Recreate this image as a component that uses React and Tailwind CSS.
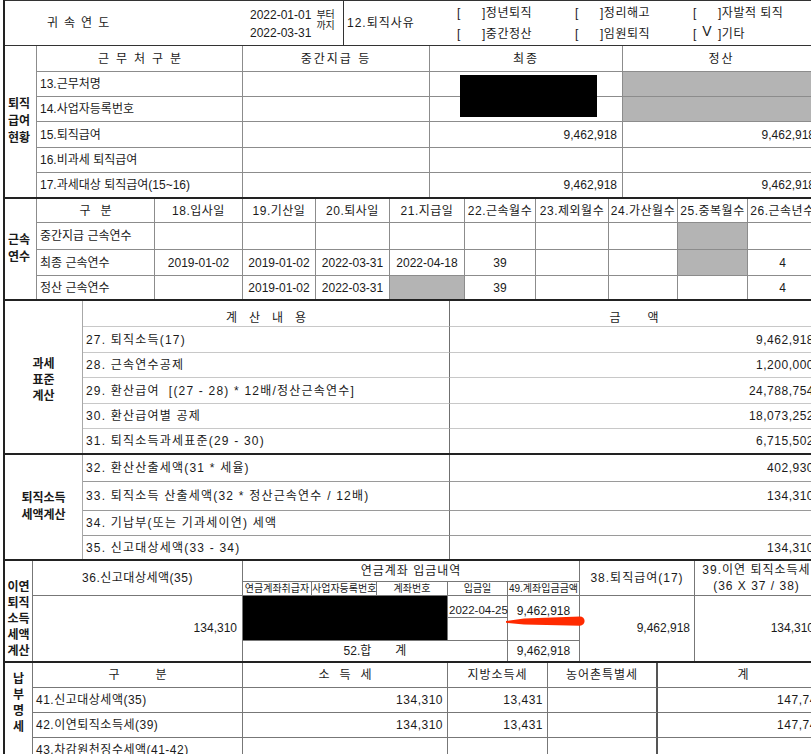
import React from "react";

const cell = "border-r border-b border-[#8c8c8c]";
const cellR = "border-r border-[#8c8c8c]";
const grey = "bg-[#b4b4b4]";
const dk = "border-r border-b border-[#777]";
const dkR = "border-r border-[#777]";
const dkB = "border-b border-[#777]";

function Sp({ chars, gap }) {
  return (
    <span className={"inline-flex " + gap}>
      {chars.map((c, i) => (
        <span key={i}>{c}</span>
      ))}
    </span>
  );
}

function Box({ label, mark }) {
  return (
    <div className="flex items-center">
      <span className="w-[25px] flex items-center">
        <span>[</span>
        {mark && <span className="ml-[6px] text-[14px] -mt-[5px]">V</span>}
      </span>
      <span className="tracking-[0.5px]">]{label}</span>
    </div>
  );
}

function Header() {
  return (
    <div className="flex h-[46px] border-t border-b border-[#333]">
      <div className="w-[238px] flex items-center pl-[42px]">
        <Sp chars={["귀", "속", "연", "도"]} gap="gap-[6px]" />
      </div>
      <div className="w-[100px] flex pt-[9px] pl-[7px]">
        <div className="flex flex-col gap-[8px] leading-[10px]">
          <span>2022-01-01</span>
          <span>2022-03-31</span>
        </div>
        <div className="ml-[5px] flex flex-col text-[10px] leading-[11px] -mt-[1px]">
          <span>부터</span>
          <span>까지</span>
        </div>
      </div>
      <div className="w-[110px] border-l border-[#333] flex items-center pl-[3px] tracking-[1px]">
        12.퇴직사유
      </div>
      <div className="grid grid-cols-[118px_118px_118px] grid-rows-[21px_21px] pt-[1px] pl-[4px]">
        <Box label="정년퇴직" />
        <Box label="정리해고" />
        <Box label="자발적 퇴직" />
        <Box label="중간정산" />
        <Box label="임원퇴직" />
        <Box label="기타" mark />
      </div>
    </div>
  );
}

function Salary() {
  return (
    <div className="border-b-2 border-[#222]">
      <table className="table-fixed border-separate border-spacing-0 w-[816px]">
        <colgroup>
          <col className="w-[32px]" />
          <col className="w-[206px]" />
          <col className="w-[187px]" />
          <col className="w-[193px]" />
          <col className="w-[198px]" />
        </colgroup>
        <tbody>
          <tr className="h-[26px]">
            <td rowSpan={6} className={`${cellR} pl-[3px] font-bold leading-[17px]`}>
              퇴직
              <br />
              급여
              <br />
              현황
            </td>
            <td className={`${cell} text-center`}>
              <Sp chars={["근", "무", "처", "구", "분"]} gap="gap-[7px]" />
            </td>
            <td className={`${cell} text-center tracking-[2px]`}>중간지급 등</td>
            <td className={`${cell} text-center tracking-[2px]`}>최종</td>
            <td className={`${cell} text-center tracking-[2px]`}>정산</td>
          </tr>
          <tr className="h-[25px]">
            <td className={`${cell} pl-[3px]`}>13.근무처명</td>
            <td className={cell}></td>
            <td className={`${cell} relative`}>
              <div className="absolute left-[30px] top-[3px] w-[137px] h-[42px] bg-black" />
            </td>
            <td className={`${cell} ${grey}`}></td>
          </tr>
          <tr className="h-[25px]">
            <td className={`${cell} pl-[3px]`}>14.사업자등록번호</td>
            <td className={cell}></td>
            <td className={cell}></td>
            <td className={`${cell} ${grey}`}></td>
          </tr>
          <tr className="h-[26px]">
            <td className={`${cell} pl-[3px]`}>15.퇴직급여</td>
            <td className={cell}></td>
            <td className={`${cell} text-right pr-[5px]`}>9,462,918</td>
            <td className={`${cell} text-right pr-[5px]`}>9,462,918</td>
          </tr>
          <tr className="h-[25px]">
            <td className={`${cell} pl-[3px]`}>16.비과세 퇴직급여</td>
            <td className={cell}></td>
            <td className={cell}></td>
            <td className={cell}></td>
          </tr>
          <tr className="h-[24px]">
            <td className={`${cellR} pl-[3px]`}>17.과세대상 퇴직급여(15~16)</td>
            <td className={cellR}></td>
            <td className={`${cellR} text-right pr-[5px]`}>9,462,918</td>
            <td className={`${cellR} text-right pr-[5px]`}>9,462,918</td>
          </tr>
        </tbody>
      </table>
    </div>
  );
}

const tenureHeads = [
  "18.입사일",
  "19.기산일",
  "20.퇴사일",
  "21.지급일",
  "22.근속월수",
  "23.제외월수",
  "24.가산월수",
  "25.중복월수",
  "26.근속년수",
];

const tenureRows = [
  { label: "중간지급 근속연수", h: "h-[27px]", v: ["", "", "", "", "", "", "", "g", ""] },
  {
    label: "최종 근속연수",
    h: "h-[26px]",
    v: ["2019-01-02", "2019-01-02", "2022-03-31", "2022-04-18", "39", "", "", "g", "4"],
  },
  { label: "정산 근속연수", h: "h-[23px]", v: ["", "2019-01-02", "2022-03-31", "g", "39", "", "", "", "4"] },
];

function Tenure() {
  return (
    <div className="border-b-2 border-[#222]">
      <table className="table-fixed border-separate border-spacing-0 w-[813px]">
        <colgroup>
          <col className="w-[32px]" />
          <col className="w-[118px]" />
          <col className="w-[88px]" />
          <col className="w-[73px]" />
          <col className="w-[74px]" />
          <col className="w-[75px]" />
          <col className="w-[71px]" />
          <col className="w-[73px]" />
          <col className="w-[69px]" />
          <col className="w-[70px]" />
          <col className="w-[70px]" />
        </colgroup>
        <tbody>
          <tr className="h-[24px]">
            <td rowSpan={4} className={`${cellR} pl-[3px] font-bold leading-[17px]`}>
              근속
              <br />
              연수
            </td>
            <td className={`${cell} text-center`}>
              <Sp chars={["구", "분"]} gap="gap-[10px]" />
            </td>
            {tenureHeads.map((h) => (
              <td key={h} className={`${cell} text-center tracking-[0.5px] whitespace-nowrap`}>
                {h}
              </td>
            ))}
          </tr>
          {tenureRows.map((r, ri) => (
            <tr key={r.label} className={r.h}>
              <td className={`${ri === 2 ? cellR : cell} pl-[3px]`}>{r.label}</td>
              {r.v.map((v, i) => (
                <td
                  key={i}
                  className={`${ri === 2 ? cellR : cell} text-center ${v === "g" ? grey : ""}`}
                >
                  {v === "g" ? "" : v}
                </td>
              ))}
            </tr>
          ))}
        </tbody>
      </table>
    </div>
  );
}

const baseRows = [
  { label: "27. 퇴직소득(17)", v: "9,462,918", h: "h-[26px]" },
  { label: "28. 근속연수공제", v: "1,200,000", h: "h-[25px]" },
  { label: "29. 환산급여  [(27 - 28) * 12배/정산근속연수]", v: "24,788,754", h: "h-[26px]" },
  { label: "30. 환산급여별 공제", v: "18,073,252", h: "h-[25px]" },
  { label: "31. 퇴직소득과세표준(29 - 30)", v: "6,715,502", h: "h-[24px]" },
];

function TaxBase() {
  return (
    <div className="border-b-2 border-[#222]">
      <table className="table-fixed border-separate border-spacing-0 w-[813px]">
        <colgroup>
          <col className="w-[78px]" />
          <col className="w-[367px]" />
          <col className="w-[368px]" />
        </colgroup>
        <tbody>
          <tr className="h-[26px]">
            <td rowSpan={6} className="border-r border-[#a8a8a8] text-center font-bold leading-[16px] pt-[6px]">
              과세
              <br />
              표준
              <br />
              계산
            </td>
            <td className="border-r border-b border-r-[#707070] border-b-[#c8c8c8] p-0">
              <div className="flex h-[25px] items-end justify-center pb-[2px]">
                <Sp chars={["계", "산", "내", "용"]} gap="gap-[12px]" />
              </div>
            </td>
            <td className="border-b border-[#c8c8c8] p-0">
              <div className="flex h-[25px] items-end justify-center pb-[2px]">
                <Sp chars={["금", "액"]} gap="gap-[27px]" />
              </div>
            </td>
          </tr>
          {baseRows.map((r, i) => (
            <tr key={r.label} className={r.h}>
              <td
                className={
                  i === 4
                    ? "border-r border-[#707070] pl-[3px] tracking-[1.2px] whitespace-pre"
                    : "border-r border-b border-r-[#707070] border-b-[#c8c8c8] pl-[3px] tracking-[1.2px] whitespace-pre"
                }
              >
                {r.label}
              </td>
              <td
                className={
                  i === 4
                    ? "text-right pr-[4px] tracking-[0.5px]"
                    : "border-b border-[#c8c8c8] text-right pr-[4px] tracking-[0.5px]"
                }
              >
                {r.v}
              </td>
            </tr>
          ))}
        </tbody>
      </table>
    </div>
  );
}

const calcRows = [
  { label: "32. 환산산출세액(31 * 세율)", v: "402,930", h: "h-[27px]" },
  { label: "33. 퇴직소득 산출세액(32 * 정산근속연수 / 12배)", v: "134,310", h: "h-[29px]" },
  { label: "34. 기납부(또는 기과세이연) 세액", v: "", h: "h-[25px]" },
  { label: "35. 신고대상세액(33 - 34)", v: "134,310", h: "h-[23px]" },
];

function TaxCalc() {
  return (
    <div className="border-b-2 border-[#222]">
      <table className="table-fixed border-separate border-spacing-0 w-[813px]">
        <colgroup>
          <col className="w-[78px]" />
          <col className="w-[367px]" />
          <col className="w-[368px]" />
        </colgroup>
        <tbody>
          {calcRows.map((r, i) => (
            <tr key={r.label} className={r.h}>
              {i === 0 && (
                <td rowSpan={4} className="border-r border-[#a8a8a8] text-center font-bold leading-[17px]">
                  퇴직소득
                  <br />
                  세액계산
                </td>
              )}
              <td
                className={
                  i === 3
                    ? "border-r border-[#707070] pl-[3px] tracking-[1.2px]"
                    : "border-r border-b border-r-[#707070] border-b-[#9a9a9a] pl-[3px] tracking-[1.2px]"
                }
              >
                {r.label}
              </td>
              <td
                className={
                  i === 3
                    ? "text-right pr-[4px] tracking-[0.5px]"
                    : "border-b border-[#9a9a9a] text-right pr-[4px] tracking-[0.5px]"
                }
              >
                {r.v}
              </td>
            </tr>
          ))}
        </tbody>
      </table>
    </div>
  );
}

function Deferred() {
  return (
    <div className="relative border-b-2 border-[#222]">
      <table className="table-fixed border-separate border-spacing-0 w-[813px]">
        <colgroup>
          <col className="w-[28px]" />
          <col className="w-[210px]" />
          <col className="w-[69px]" />
          <col className="w-[65px]" />
          <col className="w-[71px]" />
          <col className="w-[60px]" />
          <col className="w-[72px]" />
          <col className="w-[115px]" />
          <col className="w-[123px]" />
        </colgroup>
        <tbody>
          <tr className="h-[21px]">
            <td rowSpan={5} className={`${dkR} text-center font-bold leading-[16px] pt-[16px]`}>
              이연
              <br />
              퇴직
              <br />
              소득
              <br />
              세액
              <br />
              계산
            </td>
            <td rowSpan={2} className={`${dk} text-center tracking-[0.5px]`}>
              36.신고대상세액(35)
            </td>
            <td colSpan={5} className={`${dk} text-center tracking-[1px]`}>
              연금계좌 입금내역
            </td>
            <td rowSpan={2} className={`${dk} text-center tracking-[1px]`}>
              38.퇴직급여(17)
            </td>
            <td rowSpan={2} className={`${dkB} text-center leading-[16px] tracking-[1px] whitespace-nowrap`}>
              39.이연 퇴직소득세
              <br />
              (36 X 37 / 38)
            </td>
          </tr>
          <tr className="h-[14px] text-[10px]">
            <td className={`${dk} text-center whitespace-nowrap`}>연금계좌취급자</td>
            <td className={`${dk} text-center whitespace-nowrap`}>사업자등록번호</td>
            <td className={`${dk} text-center`}>계좌번호</td>
            <td className={`${dk} text-center`}>입금일</td>
            <td className={`${dk} text-center whitespace-nowrap`}>49.계좌입금금액</td>
          </tr>
          <tr className="h-[21px]">
            <td rowSpan={3} className={`${dkR} text-right pr-[5px]`}>
              134,310
            </td>
            <td colSpan={3} rowSpan={2} className={`${dk} bg-black`}></td>
            <td className={`${dk} align-top pt-[9px] pl-[1px] text-[11.5px] whitespace-nowrap`}>2022-04-25</td>
            <td rowSpan={2} className={`${dk} align-top pt-[9px] text-center`}>
              9,462,918
            </td>
            <td rowSpan={3} className={`${dkR} text-right pr-[4px]`}>
              9,462,918
            </td>
            <td rowSpan={3} className="text-right pr-[4px]">
              134,310
            </td>
          </tr>
          <tr className="h-[23px]">
            <td className={dk}></td>
          </tr>
          <tr className="h-[20px]">
            <td colSpan={4} className={`${dkR} text-center`}>
              <span className="inline-flex gap-[24px]">
                <span>52.합</span>
                <span>계</span>
              </span>
            </td>
            <td className={`${dkR} text-center`}>9,462,918</td>
          </tr>
        </tbody>
      </table>
      <svg
        className="absolute left-[499px] top-[52px]"
        width="84"
        height="14"
        viewBox="0 0 84 14"
      >
        <path
          d="M2 8 L20 5.5 L76 3.5 A4.6 4.6 0 0 1 76 12.7 L20 11.5 L2 9.8 Z"
          fill="#ff2a00"
        />
      </svg>
    </div>
  );
}

const payRows = [
  { label: "41.신고대상세액(35)", v: ["134,310", "13,431", "", "147,741"] },
  { label: "42.이연퇴직소득세(39)", v: ["134,310", "13,431", "", "147,741"] },
  { label: "43.차감원천징수세액(41-42)", v: ["", "", "", ""] },
];

function Payment() {
  return (
    <div>
      <table className="table-fixed border-separate border-spacing-0 w-[823px]">
        <colgroup>
          <col className="w-[28px]" />
          <col className="w-[210px]" />
          <col className="w-[205px]" />
          <col className="w-[100px]" />
          <col className="w-[110px]" />
          <col className="w-[170px]" />
        </colgroup>
        <tbody>
          <tr className="h-[25px]">
            <td rowSpan={4} className={`${dkR} align-top text-center font-bold leading-[16px] pt-[8px]`}>
              납
              <br />
              부
              <br />
              명
              <br />
              세
            </td>
            <td className={`${dk} text-center`}>
              <Sp chars={["구", "분"]} gap="gap-[36px]" />
            </td>
            <td className={`${dk} text-center`}>
              <Sp chars={["소", "득", "세"]} gap="gap-[10px]" />
            </td>
            <td className={`${dk} text-center tracking-[1px]`}>지방소득세</td>
            <td className="border-b border-r-2 border-b-[#777] border-r-[#555] text-center tracking-[1px]">
              농어촌특별세
            </td>
            <td className={`${dkB} text-center`}>계</td>
          </tr>
          {payRows.map((r) => (
            <tr key={r.label} className="h-[25px]">
              <td className={`${dk} pl-[3px] tracking-[0.5px]`}>{r.label}</td>
              <td className={`${dk} text-right pr-[4px] tracking-[0.5px]`}>{r.v[0]}</td>
              <td className={`${dk} text-right pr-[4px] tracking-[0.5px]`}>{r.v[1]}</td>
              <td className="border-b border-r-2 border-b-[#777] border-r-[#555]">{r.v[2]}</td>
              <td className={`${dkB} text-right pr-[4px] tracking-[0.5px]`}>{r.v[3]}</td>
            </tr>
          ))}
        </tbody>
      </table>
    </div>
  );
}

export default function App() {
  return (
    <div className="w-[811px] h-[754px] overflow-hidden bg-white text-[12px] leading-none text-[#1a1a1a] font-['Liberation_Sans','Noto_Sans_CJK_KR',sans-serif]">
      <div className="ml-[3px] border-l-2 border-[#222]">
        <Header />
        <Salary />
        <Tenure />
        <TaxBase />
        <TaxCalc />
        <Deferred />
        <Payment />
      </div>
    </div>
  );
}
